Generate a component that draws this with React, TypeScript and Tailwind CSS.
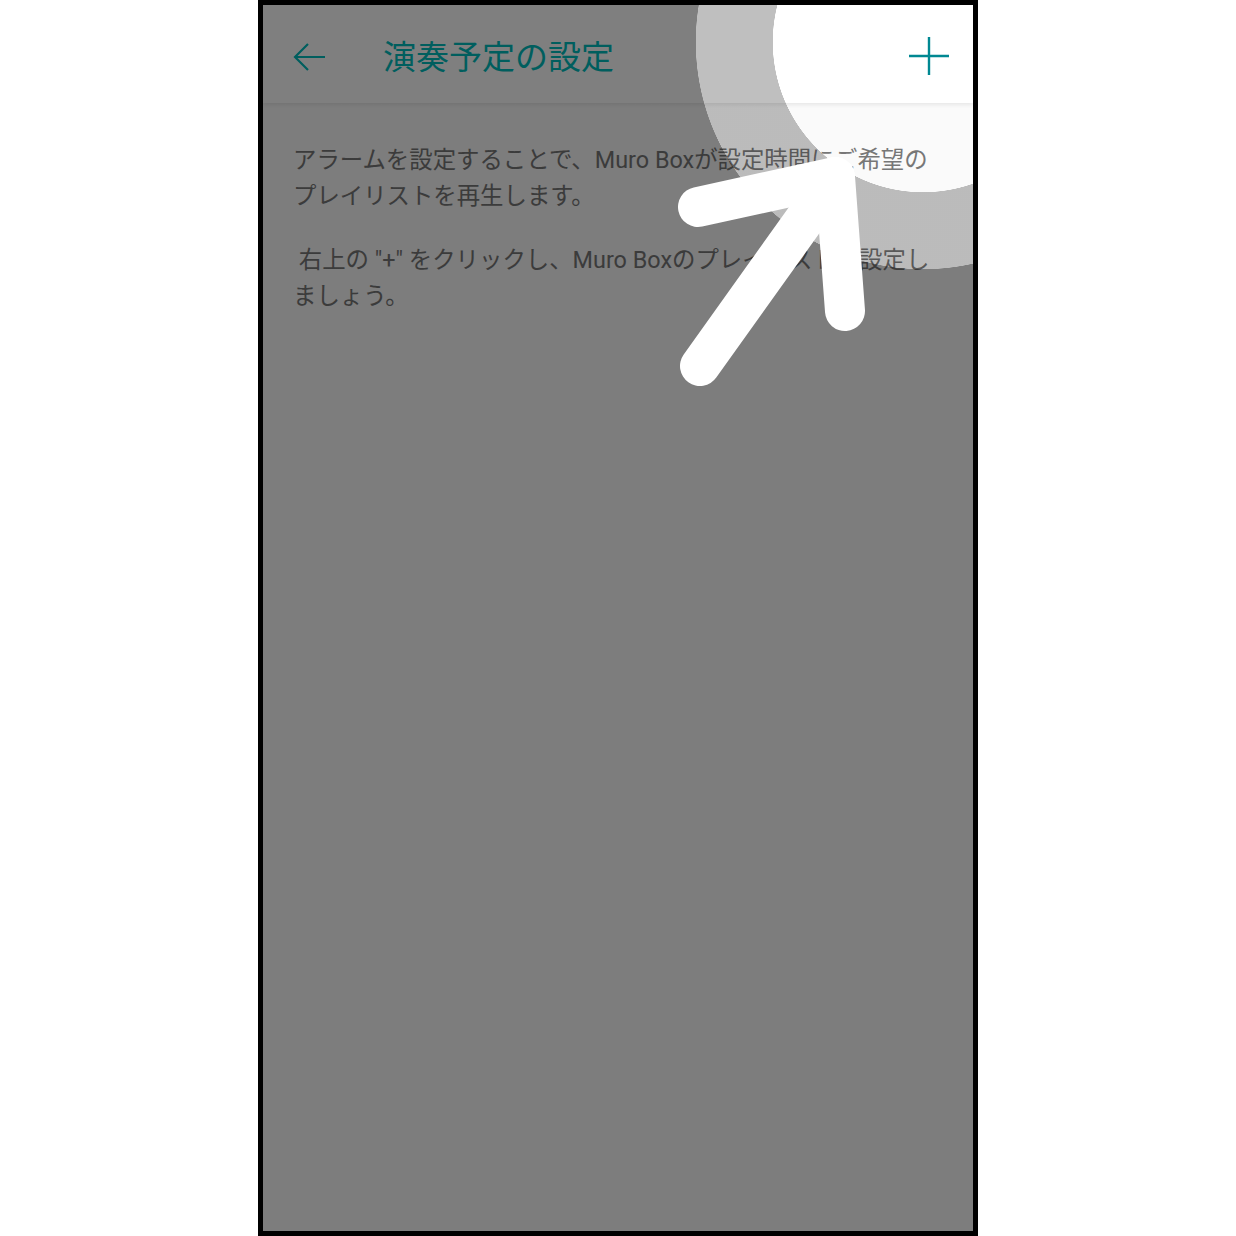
import React from 'react';

const FONT = "font-['Roboto','Noto_Sans_CJK_JP',sans-serif]";

const BackArrow = () => (
  <svg width="33" height="30" viewBox="0 0 33 30" fill="none" stroke="#00bcbc" strokeWidth={2.2}>
    <path d="M2 15 H32 M15 2 L2 15 L15 28" />
  </svg>
);

const PlusIcon = () => (
  <svg width="40" height="40" viewBox="0 0 40 40" fill="none" stroke="#008892" strokeWidth={2.4}>
    <path d="M0 20 H40 M20 1 V39" />
  </svg>
);

const App: React.FC = () => {
  return (
    <div className={`min-h-screen bg-white flex justify-center ${FONT}`}>
      <div className="relative w-[720px] h-[1236px] border-[5px] border-black bg-[#fafafa] overflow-hidden">
        {/* Header */}
        <header className="relative z-10 h-[98px] bg-white shadow-[0_2px_4px_rgba(0,0,0,0.08)] flex items-center pt-[6px] pl-[30px] pr-[24px]">
          <BackArrow />
          <h1 className="ml-[57px] text-[33px] leading-none text-[#00bcbc]">演奏予定の設定</h1>
          <button aria-label="追加" className="ml-auto -mt-[2px]">
            <PlusIcon />
          </button>
        </header>

        {/* Body */}
        <div className="pt-[39px] px-[30px] text-[23.4px] leading-[36px] text-[#777777]">
          <p className="whitespace-nowrap">
            アラームを設定することで、Muro Boxが設定時間にご希望の<br />
            プレイリストを再生します。
          </p>
          <p className="mt-[28px] whitespace-nowrap">
            &nbsp;右上の "+" をクリックし、Muro Boxのプレイリストを設定し<br />
            ましょう。
          </p>
        </div>

        {/* Tutorial spotlight overlay */}
        <div className="pointer-events-none absolute inset-0 z-20 bg-[radial-gradient(circle_at_660px_37px,transparent_150px,rgba(0,0,0,0.25)_150.5px,rgba(0,0,0,0.25)_227px,rgba(0,0,0,0.5)_227.5px)]" />

        {/* Pointer arrow */}
        <svg className="pointer-events-none absolute inset-0 z-30" width="710" height="1226" viewBox="0 0 710 1226" fill="none" stroke="#ffffff" strokeWidth={40} strokeLinecap="round" strokeLinejoin="round">
          <path d="M435 202 L572 172 L582 306" />
          <path d="M437 361 L572 172" />
        </svg>
      </div>
    </div>
  );
};

export default App;
